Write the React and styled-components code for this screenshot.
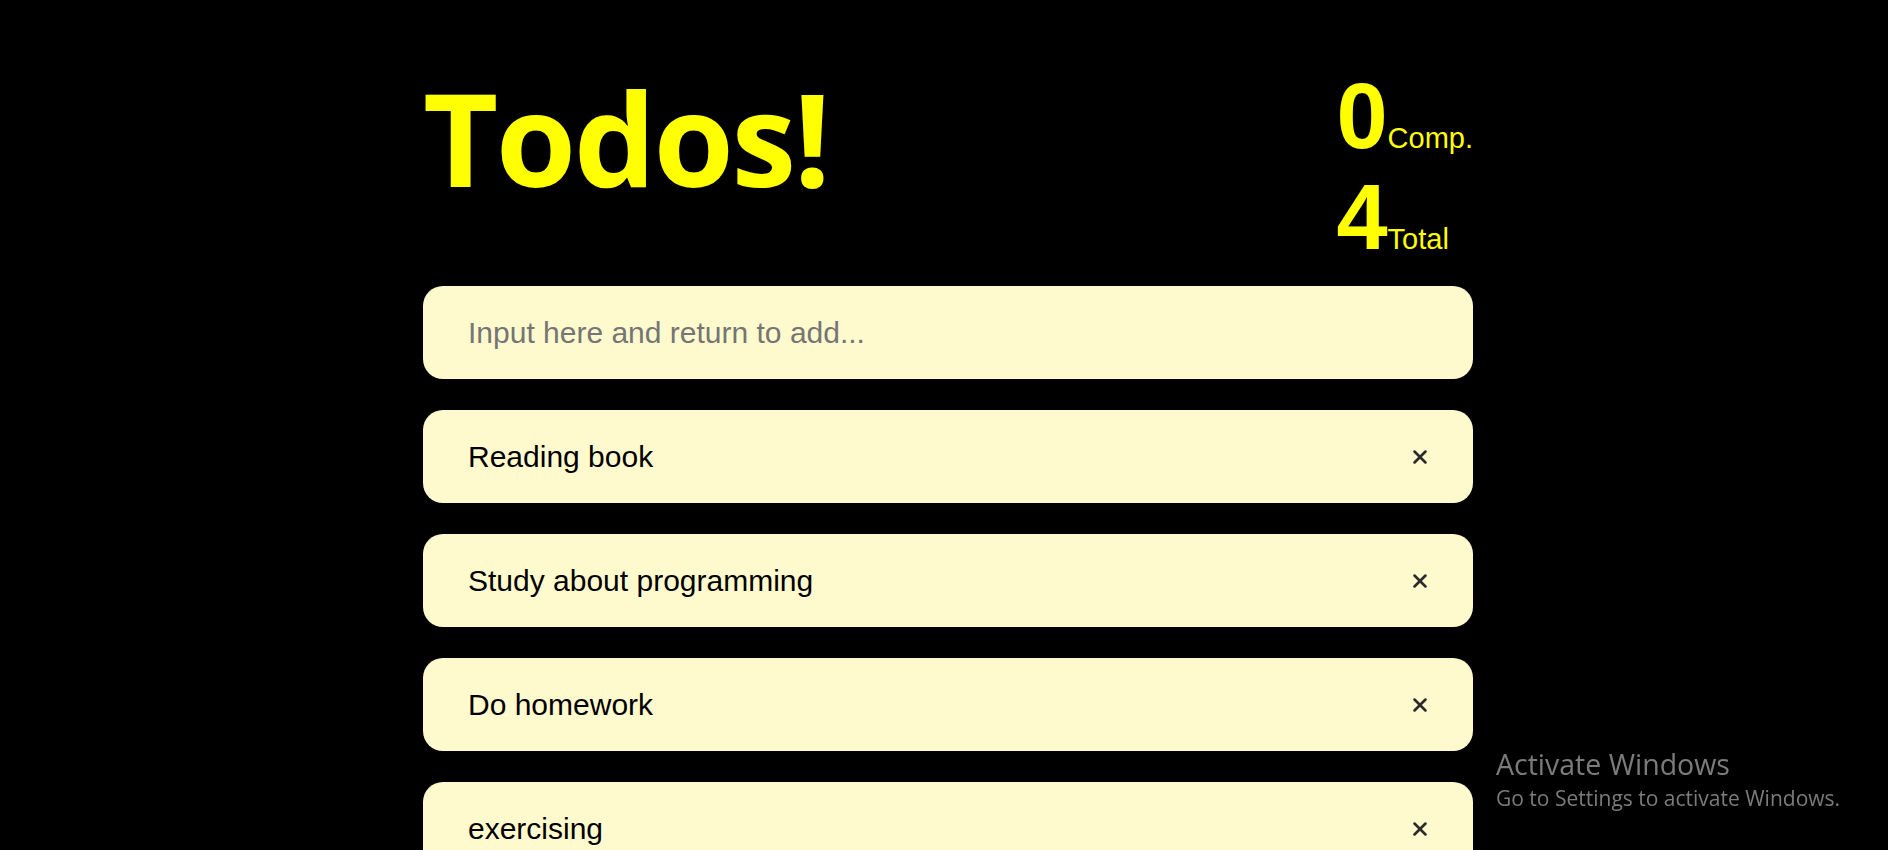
import React, { useState } from "react";
import styled, { createGlobalStyle } from "styled-components";
import { X } from "lucide-react";

const Global = createGlobalStyle`
  html, body { margin: 0; padding: 0; background: #000; }
  body { font-family: "Liberation Sans", Arial, sans-serif; overflow: hidden; }
`;

const Page = styled.div`
  min-height: 850px;
  padding-left: 8px;
  box-sizing: border-box;
`;

const Container = styled.div`
  width: 1050px;
  margin: 0 auto;
`;

const Header = styled.header`
  display: flex;
  justify-content: space-between;
  align-items: flex-start;
  padding-top: 66px;
`;

const Title = styled.h1`
  margin: 6px 0 0 0;
  font-family: "Open Sans", "Noto Sans", sans-serif;
  font-weight: 700;
  font-size: 130px;
  line-height: 130px;
  color: #ffff00;
  letter-spacing: -2.5px;
`;

const Stats = styled.div`
  display: flex;
  flex-direction: column;
`;

const StatRow = styled.div`
  display: flex;
  align-items: baseline;
  height: 101px;
  color: #ffff00;
  white-space: nowrap;
`;

const StatNum = styled.span`
  font-family: "Liberation Sans", Arial, sans-serif;
  font-weight: 700;
  font-size: 92px;
  line-height: 101px;
`;

const StatLabel = styled.span`
  font-family: "Liberation Sans", Arial, sans-serif;
  font-size: 29px;
  line-height: 1;
`;

const List = styled.div`
  display: flex;
  flex-direction: column;
  gap: 31px;
  margin-top: 18px;
`;

const Card = styled.div`
  height: 93px;
  box-sizing: border-box;
  background: #fffacd;
  border-radius: 20px;
  display: flex;
  align-items: center;
  padding: 0 42px 0 45px;
`;

const Input = styled.input`
  flex: 1;
  border: none;
  outline: none;
  background: transparent;
  font-family: "Liberation Sans", Arial, sans-serif;
  font-size: 30px;
  color: #000;
  padding: 0;
  caret-color: #000;
  &::placeholder { color: #757575; }
`;

const ItemText = styled.span`
  flex: 1;
  font-family: "Liberation Sans", Arial, sans-serif;
  font-size: 30px;
  color: #000;
`;

const RemoveBtn = styled.button`
  border: none;
  background: transparent;
  padding: 0;
  display: flex;
  align-items: center;
  justify-content: center;
  width: 22px;
  height: 22px;
  color: #2b2b2b;
  cursor: pointer;
`;

const Watermark = styled.div`
  position: fixed;
  left: 1496px;
  top: 745px;
  font-family: "Open Sans", "Noto Sans", sans-serif;
  color: #7b7b7b;
  pointer-events: none;
`;

const WmTitle = styled.div`
  font-size: 28.5px;
  line-height: 38px;
`;

const WmSub = styled.div`
  font-size: 21px;
  line-height: 30px;
`;

export default function App() {
  const [todos, setTodos] = useState([
    { id: 1, text: "Reading book", done: false },
    { id: 2, text: "Study about programming", done: false },
    { id: 3, text: "Do homework", done: false },
    { id: 4, text: "exercising", done: false },
  ]);
  const [value, setValue] = useState("");
  const completed = todos.filter((t) => t.done).length;

  return (
    <Page>
      <Global />
      <Container>
        <Header>
          <Title>Todos!</Title>
          <Stats>
            <StatRow>
              <StatNum>{completed}</StatNum>
              <StatLabel>Comp.</StatLabel>
            </StatRow>
            <StatRow>
              <StatNum>{todos.length}</StatNum>
              <StatLabel>Total</StatLabel>
            </StatRow>
          </Stats>
        </Header>
        <List>
          <Card>
            <Input
              autoFocus
              placeholder="Input here and return to add..."
              value={value}
              onChange={(e) => setValue(e.target.value)}
              onKeyDown={(e) => {
                if (e.key === "Enter" && value.trim()) {
                  setTodos([...todos, { id: Date.now(), text: value.trim(), done: false }]);
                  setValue("");
                }
              }}
            />
          </Card>
          {todos.map((t) => (
            <Card key={t.id}>
              <ItemText>{t.text}</ItemText>
              <RemoveBtn onClick={() => setTodos(todos.filter((x) => x.id !== t.id))}>
                <X size={22} strokeWidth={2.8} />
              </RemoveBtn>
            </Card>
          ))}
        </List>
      </Container>
      <Watermark>
        <WmTitle>Activate Windows</WmTitle>
        <WmSub>Go to Settings to activate Windows.</WmSub>
      </Watermark>
    </Page>
  );
}
